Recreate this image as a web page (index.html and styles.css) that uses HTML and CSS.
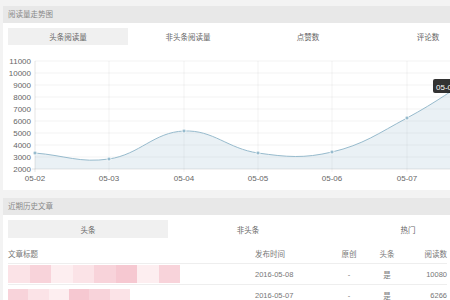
FILE: index.html
```html
<!DOCTYPE html>
<html>
<head lang="zh">
    <meta charset="UTF-8">
    <title>阅读量统计</title>
    <link rel="stylesheet" href="styles.css">
</head>
<body>
<div class="page">
    <div class="panel">
        <div class="panel-hd">阅读量走势图</div>
        <div class="panel-bd">
            <ul class="tabs tabs-4">
                <li class="tab active">头条阅读量</li>
                <li class="tab">非头条阅读量</li>
                <li class="tab">点赞数</li>
                <li class="tab">评论数</li>
            </ul>
            <svg class="chart" width="480" height="145" viewBox="8 45 480 145">
                <!-- 网格 -->
                <g class="grid">
                    <line x1="35" y1="61" x2="488" y2="61"/>
                    <line x1="35" y1="73" x2="488" y2="73"/>
                    <line x1="35" y1="85" x2="488" y2="85"/>
                    <line x1="35" y1="97" x2="488" y2="97"/>
                    <line x1="35" y1="109" x2="488" y2="109"/>
                    <line x1="35" y1="121" x2="488" y2="121"/>
                    <line x1="35" y1="133" x2="488" y2="133"/>
                    <line x1="35" y1="145" x2="488" y2="145"/>
                    <line x1="35" y1="157" x2="488" y2="157"/>
                    <line x1="109" y1="61" x2="109" y2="172"/>
                    <line x1="184" y1="61" x2="184" y2="172"/>
                    <line x1="258" y1="61" x2="258" y2="172"/>
                    <line x1="332" y1="61" x2="332" y2="172"/>
                    <line x1="407" y1="61" x2="407" y2="172"/>
                    <line x1="481" y1="61" x2="481" y2="172"/>
                </g>
                <g class="axis">
                    <line x1="35" y1="61" x2="35" y2="172"/>
                    <line x1="32" y1="169" x2="488" y2="169"/>
                </g>
                <g class="ylabels">
                    <text x="31" y="64">11000</text>
                    <text x="31" y="76">10000</text>
                    <text x="31" y="88">9000</text>
                    <text x="31" y="100">8000</text>
                    <text x="31" y="112">7000</text>
                    <text x="31" y="124">6000</text>
                    <text x="31" y="136">5000</text>
                    <text x="31" y="148">4000</text>
                    <text x="31" y="160">3000</text>
                    <text x="31" y="172">2000</text>
                </g>
                <g class="xlabels">
                    <text x="35" y="181">05-02</text>
                    <text x="109" y="181">05-03</text>
                    <text x="184" y="181">05-04</text>
                    <text x="258" y="181">05-05</text>
                    <text x="332" y="181">05-06</text>
                    <text x="407" y="181">05-07</text>
                    <text x="481" y="181">05-08</text>
                </g>
                <path class="area" d="M35,153 C64.6,155.4 80.3,163.2 109,159 C139.9,154.4 153.7,132.2 184,131 C213.3,129.8 227.8,148.7 258,153 C287,157.1 303.8,158.6 332,152 C363.4,144.6 378,133.5 407,118 C437.6,101.5 451.4,90.4 481,72 L481,169 L35,169 Z"/>
                <path class="line" d="M35,153 C64.6,155.4 80.3,163.2 109,159 C139.9,154.4 153.7,132.2 184,131 C213.3,129.8 227.8,148.7 258,153 C287,157.1 303.8,158.6 332,152 C363.4,144.6 378,133.5 407,118 C437.6,101.5 451.4,90.4 481,72"/>
                <g class="dots">
                    <circle cx="35" cy="153" r="2"/>
                    <circle cx="109" cy="159" r="2"/>
                    <circle cx="184" cy="131" r="2"/>
                    <circle cx="258" cy="153" r="2"/>
                    <circle cx="332" cy="152" r="2"/>
                    <circle cx="407" cy="118" r="2"/>
                    <circle cx="481" cy="72" r="2"/>
                </g>
                <!-- 提示框 -->
                <g class="tip">
                    <rect x="433" y="79" width="52" height="14" rx="2"/>
                    <text x="436" y="89.5">05-08: 10080</text>
                </g>
            </svg>
        </div>
    </div>

    <div class="panel">
        <div class="panel-hd">近期历史文章</div>
        <div class="panel-bd">
            <ul class="tabs tabs-3">
                <li class="tab active">头条</li>
                <li class="tab">非头条</li>
                <li class="tab">热门</li>
            </ul>
            <table class="articles">
                <thead>
                <tr>
                    <th class="c-title">文章标题</th>
                    <th class="c-date">发布时间</th>
                    <th class="c-mid">原创</th>
                    <th class="c-mid">头条</th>
                    <th class="c-num">阅读数</th>
                </tr>
                </thead>
                <tbody>
                <tr>
                    <td class="c-title">
                        <span class="mosaic mosaic-long">
                            <i class="m1"></i><i class="m2"></i><i class="m3"></i><i class="m1"></i><i class="m2"></i><i class="m4"></i><i class="m3"></i><i class="m2"></i>
                        </span>
                    </td>
                    <td class="c-date">2016-05-08</td>
                    <td class="c-mid">-</td>
                    <td class="c-mid">是</td>
                    <td class="c-num">10080</td>
                </tr>
                <tr>
                    <td class="c-title">
                        <span class="mosaic mosaic-short">
                            <i class="m2"></i><i class="m1"></i><i class="m3"></i><i class="m4"></i><i class="m2"></i><i class="m1"></i>
                        </span>
                    </td>
                    <td class="c-date">2016-05-07</td>
                    <td class="c-mid">-</td>
                    <td class="c-mid">是</td>
                    <td class="c-num">6266</td>
                </tr>
                </tbody>
            </table>
        </div>
    </div>
</div>
</body>
</html>
```

FILE: styles.css
```css
*{
    margin: 0;
    padding: 0;
}
html,body{
    font-family: "Liberation Sans", "Noto Sans CJK SC", sans-serif;
    background: #f3f3f3;
    overflow: hidden;
}
.page{
    width: 500px;
    padding-top: 6px;
}
.panel{
    width: 490px;
    margin: 0 0 8px 3px;
    background: #fff;
}
.panel-hd{
    height: 17px;
    line-height: 17px;
    padding-left: 5px;
    background: #e8e8e8;
    font-size: 7.5px;
    color: #888;
}
.panel-bd{
    padding: 5px 5px 0;
}
.tabs{
    list-style: none;
    display: grid;
    height: 17px;
}
.tabs-4{
    grid-template-columns: repeat(4, 1fr);
}
.tabs-3{
    grid-template-columns: repeat(3, 1fr);
    height: 18px;
}
.tab{
    display: flex;
    align-items: center;
    justify-content: center;
    font-size: 7.5px;
    color: #666;
}
.tab.active{
    background: #f0f0f0;
}
.chart{
    display: block;
}
.grid line{
    stroke: rgba(0,0,0,.05);
    stroke-width: 1;
}
.axis line{
    stroke: rgba(0,0,0,.1);
    stroke-width: 1;
}
.ylabels text{
    font-size: 8px;
    fill: #666;
    text-anchor: end;
}
.xlabels text{
    font-size: 8px;
    fill: #666;
    text-anchor: middle;
}
.area{
    fill: rgba(151,187,205,.2);
}
.line{
    fill: none;
    stroke: rgba(151,187,205,1);
    stroke-width: 1;
}
.dots circle{
    fill: #97bbcd;
    stroke: #fff;
    stroke-width: .8;
}
.tip rect{
    fill: rgba(0,0,0,.8);
}
.tip text{
    font-size: 8px;
    fill: #fff;
}
.articles{
    margin-top: 5px;
    width: 439px;
    border-collapse: collapse;
    table-layout: fixed;
    font-size: 7.5px;
    color: #777;
}
.articles th,
.articles td{
    height: 20px;
    padding: 0;
    font-weight: normal;
    text-align: left;
    vertical-align: middle;
}
.articles tbody tr{
    border-top: 1px solid #eee;
}
.c-title{
    width: 247px;
}
.c-date{
    width: 75px;
}
.c-mid{
    width: 38px;
    text-align: center !important;
}
.c-num{
    width: 41px;
    text-align: right !important;
}
.mosaic{
    display: flex;
    height: 18px;
}
.mosaic-long{
    width: 172px;
}
.mosaic-short{
    width: 122px;
    height: 13px;
}
.mosaic i{
    flex: 1;
}
.m1{ background: #fbe3e7; }
.m2{ background: #f8d3da; }
.m3{ background: #fdeef0; }
.m4{ background: #f6c8d1; }
```
